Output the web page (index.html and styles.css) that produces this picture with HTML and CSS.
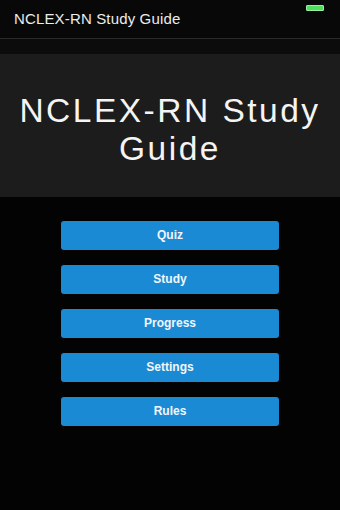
FILE: index.html
```html
<!DOCTYPE html>
<html>
<head>
<meta charset="utf-8">
<link rel="stylesheet" href="styles.css">
</head>
<body>
<div class="app">
  <header class="topbar">
    <span class="topbar-title">NCLEX-RN Study Guide</span>
    <span class="battery"></span>
  </header>
  <div class="spacer"></div>
  <section class="hero">
    <h1 class="hero-title">NCLEX-RN Study<br>Guide</h1>
  </section>
  <nav class="menu">
    <button class="menu-btn">Quiz</button>
    <button class="menu-btn">Study</button>
    <button class="menu-btn">Progress</button>
    <button class="menu-btn">Settings</button>
    <button class="menu-btn">Rules</button>
  </nav>
</div>
</body>
</html>
```
FILE: styles.css
```css
html, body {
  margin: 0;
  padding: 0;
  background: #030303;
}
.app {
  width: 340px;
  height: 510px;
  background: #030303;
  font-family: "Liberation Sans", Arial, sans-serif;
}
.topbar {
  position: relative;
  height: 38px;
  background: #080808;
  border-bottom: 1px solid #2a2a2a;
  display: flex;
  align-items: center;
  padding-left: 14px;
  box-sizing: content-box;
}
.topbar-title {
  color: #ececec;
  font-size: 15px;
  letter-spacing: 0.15px;
  margin-top: -1px;
}
.battery {
  position: absolute;
  top: 5px;
  right: 16px;
  width: 16px;
  height: 4px;
  background: #4fdc5f;
  border: 1px solid #9aeea2;
  border-radius: 1px;
}
.spacer {
  height: 15px;
  background: #0c0c0c;
}
.hero {
  height: 143px;
  background: #1c1c1c;
  display: flex;
  align-items: center;
  justify-content: center;
  box-sizing: border-box;
  padding-top: 8px;
}
.hero-title {
  margin: 0;
  color: #f4f4f4;
  font-weight: 400;
  font-size: 33.5px;
  letter-spacing: 2.5px;
  line-height: 38px;
  text-align: center;
}
.menu {
  display: flex;
  flex-direction: column;
  align-items: center;
  gap: 15px;
  padding-top: 24px;
}
.menu-btn {
  width: 218px;
  height: 29px;
  margin: 0;
  padding: 0 0 2px 0;
  border: none;
  border-radius: 3px;
  background: #1a8ad4;
  color: #f2f6fa;
  font-family: "Liberation Sans", Arial, sans-serif;
  font-weight: bold;
  font-size: 12px;
}
```
